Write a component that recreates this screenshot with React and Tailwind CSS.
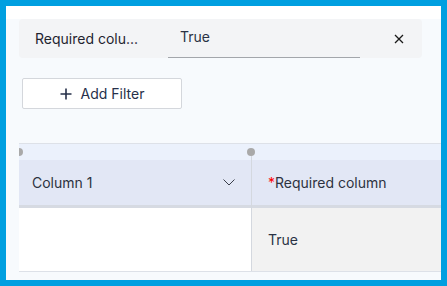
import React from "react";

export default function App() {
  return (
    <div
      className="w-[447px] h-[286px] bg-[#009fe0] p-[6px] box-border overflow-hidden"
      style={{ fontFamily: "Inter, 'Noto Sans', sans-serif" }}
    >
      <div className="w-full h-full bg-[#f7fafd] flex flex-col overflow-hidden">
        <div className="h-[13px] bg-white shrink-0" />
        {/* filter bar */}
        <div className="ml-[13px] w-[403px] h-[39px] shrink-0 bg-[#f3f4f6] rounded-[4px] flex items-center">
          <div className="pl-[16px] w-[149px] text-[14px] text-[#1f2430] whitespace-nowrap">
            Required colu...
          </div>
          <div className="w-[192px] h-[39px] flex items-center border-b border-[#a3a6ab] box-border pt-[1px] pl-[12px] text-[14px] text-[#2a3245]">
            <span className="-mt-[4px]">True</span>
          </div>
          <div className="ml-[34px] w-[10px] h-[10px] flex items-center justify-center">
            <svg width="10" height="10" viewBox="0 0 10 10">
              <path d="M1 1 L9 9 M9 1 L1 9" stroke="#1a1a1a" strokeWidth="1.3" />
            </svg>
          </div>
        </div>
        {/* add filter */}
        <div className="mt-[20px] ml-[16px] shrink-0">
          <button className="w-[160px] h-[31px] bg-white border border-[#d4d7dc] rounded-[2px] flex items-center justify-center gap-[9px] text-[14px] text-[#26304a]">
            <svg width="12" height="12" viewBox="0 0 12 12">
              <path d="M6 0.5 V11.5 M0.5 6 H11.5" stroke="#26304a" strokeWidth="1.6" />
            </svg>
            <span>Add Filter</span>
          </button>
        </div>
        {/* table */}
        <div className="mt-[34px] ml-[13px] shrink-0 relative overflow-hidden">
          <div className="h-[1px] bg-[#dde1e8]" />
          <div className="h-[16px] bg-[#ebf1fc]" />
          <div className="flex h-[45px] bg-[#e2e7f5]">
            <div className="w-[232px] flex items-center pl-[13px] pr-[16px] text-[14px] text-[#2d3240]">
              <span className="flex-1">Column 1</span>
              <svg width="12" height="7" viewBox="0 0 12 7">
                <path d="M0.5 0.5 L6 6 L11.5 0.5" stroke="#3a3f4b" strokeWidth="1" fill="none" />
              </svg>
            </div>
            <div className="flex-1 flex items-center pl-[17px] text-[14px] text-[#2d3240] whitespace-nowrap">
              <span className="text-[#ff0000]">*</span>Required column
            </div>
          </div>
          <div className="h-[3px] bg-[#d6dae2]" />
          <div className="flex h-[63px]">
            <div className="w-[232px] bg-white" />
            <div className="flex-1 bg-[#f2f2f2] flex items-center pl-[17px] text-[14px] text-[#2a3245]">
              True
            </div>
          </div>
          <div className="h-[1px] bg-[#dde1e8]" />
          {/* column divider */}
          <div className="absolute left-[232px] top-[9px] bottom-[1px] w-[1px] bg-[#d4d8df]" />
          {/* handles */}
          <div className="absolute -left-[4px] top-[5px] w-[8px] h-[8px] rounded-full bg-[#a9a9a9]" />
          <div className="absolute left-[228px] top-[5px] w-[8px] h-[8px] rounded-full bg-[#a9a9a9]" />
        </div>
      </div>
    </div>
  );
}
